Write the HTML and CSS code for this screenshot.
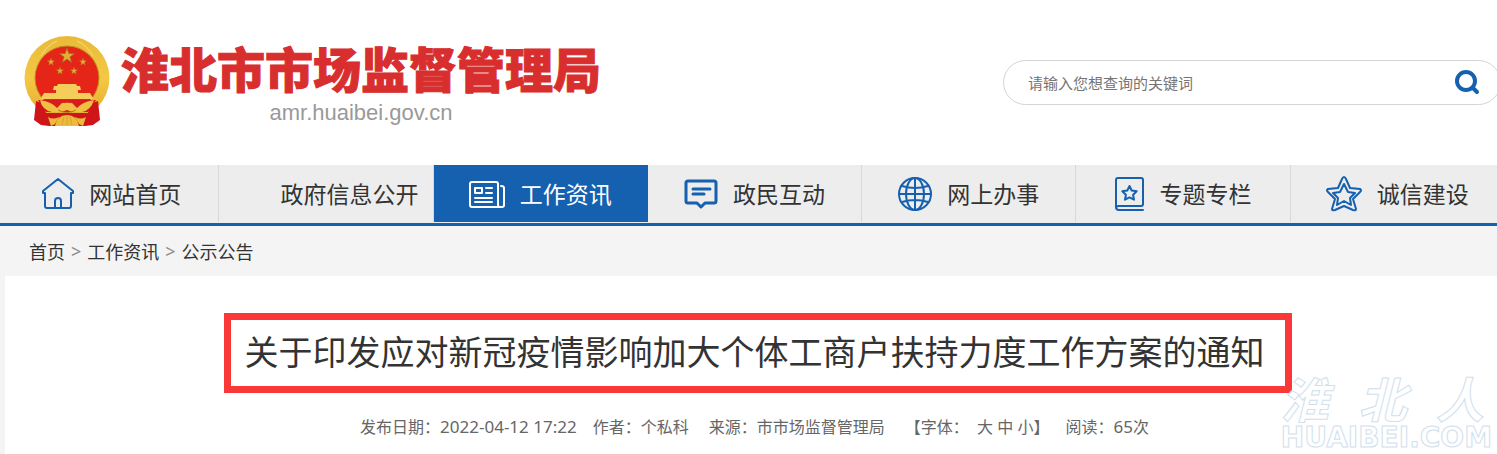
FILE: index.html
```
<!DOCTYPE html>
<html lang="zh-CN">
<head>
    <meta charset="UTF-8">
    <meta name="viewport" content="width=device-width, initial-scale=1.0">
    <title>淮北市市场监督管理局</title>
    <link rel="stylesheet" href="styles.css">
</head>
<body>
    <header class="header">
        <a class="logo" href="#">
            <svg class="emblem" viewBox="0 0 86 91" aria-hidden="true">
                <defs>
                    <linearGradient id="gold" x1="0" y1="0" x2="0" y2="1">
                        <stop offset="0" stop-color="#e9b93a"/>
                        <stop offset="0.5" stop-color="#f3c944"/>
                        <stop offset="1" stop-color="#e2a92c"/>
                    </linearGradient>
                    <path id="star" d="M0-10 2.3-3.1 9.5-3.1 3.7 1.2 5.9 8.1 0 3.9-5.9 8.1-3.7 1.2-9.5-3.1-2.3-3.1z"/>
                </defs>
                <ellipse cx="43" cy="42" rx="42.500" ry="42" fill="url(#gold)"/>
                <circle cx="43" cy="42" r="32" fill="#e62519" stroke="#c68a20" stroke-width="1"/>
                <g fill="#e2ae35" stroke="#a8691b" stroke-width="1">
                    <use href="#star" transform="translate(43 20) scale(.8)"/>
                    <use href="#star" transform="translate(27 26) scale(.4)"/>
                    <use href="#star" transform="translate(59 26) scale(.4)"/>
                    <use href="#star" transform="translate(36 35) scale(.4)"/>
                    <use href="#star" transform="translate(50 35) scale(.4)"/>
                </g>
                <path d="M34 48h18l1 2h3l1 4h-3v3H32v-3h-3l1-4h3zM20 57h46l3 5v1H17v-1z" fill="#f5cd5b"/>
                <path d="M14 64h58L64 76H22z" fill="#d91b1c"/>
                <path d="M12 65 10 84l7 5 8 1h36l8-1 7-5-2-19q-8 1-10 12H22q-2-11-10-12z" fill="#cf1519"/>
                <path d="M16 64q12 2 17 8l3-3q2-3 5-2 2-1 4 0 3-1 5 2l3 3q5-6 17-8-3 10-12 12-9 1-15-2-7 3-15 2-10-2-12-12z" fill="#f0c045"/>
                <path d="M34 74q9 5 18 0" fill="none" stroke="#b97a1c"/>
                <path d="M24 81q5 3 11 0l-4 7-4 2zM62 81q-5 3-11 0l4 7 4 2z" fill="#edbb3c"/>
                <path d="M31 90q2-11 12-11t12 11z" fill="#edbb3c"/>
                <path d="M38 89l2-8M48 89l-2-8M43 89v-9" fill="none" stroke="#d9a232"/>
                <path d="M17 20q6-11 16-15M69 20q-6-11-16-15" fill="none" stroke="#f8dc7a" stroke-width="1"/>
            </svg>
            <span class="logo-text">
                <span class="logo-name">淮北市市场监督管理局</span>
                <span class="logo-url">amr.huaibei.gov.cn</span>
            </span>
        </a>
        <form class="search">
            <input class="search-input" type="text" aria-label="搜索" placeholder="请输入您想查询的关键词">
            <button class="search-button" type="button" aria-label="搜索">
                <svg width="26" height="26" viewBox="0 0 26 26">
                    <circle cx="12" cy="11" r="9" fill="none" stroke="#1660b0" stroke-width="4"/>
                    <path d="M19 18l4 4" stroke="#1660b0" stroke-width="4" stroke-linecap="round"/>
                </svg>
            </button>
        </form>
    </header>

    <nav class="nav">
        <div class="nav-list">
            <a class="nav-item" href="#">
                <svg class="nav-icon" width="32" height="34" viewBox="0 0 32 34">
                    <path d="M1 16v-2L16 2l15 12v2h-2v13q0 2-2 2H5q-2 0-2-2V16zM13 31v-7q0-3 3-3t3 3v7"/>
                </svg>
                网站首页
            </a>
            <a class="nav-item" href="#">
                <span class="nav-blank"></span>
                政府信息公开
            </a>
            <a class="nav-item active" href="#">
                <svg class="nav-icon" width="36" height="34" viewBox="0 0 36 34">
                    <path d="M29 30H3q-2 0-2-2V7q0-2 2-2h24q2 0 2 2v21q0 2 2 2h2q2 0 2-2V11q0-2-3-2M6 11h7v5H6zM17 11h6M17 16h6M6 21h17M6 25h17"/>
                </svg>
                工作资讯
            </a>
            <a class="nav-item" href="#">
                <svg class="nav-icon bold" width="34" height="34" viewBox="0 0 34 34">
                    <path d="M4 4h26q2 0 2 2v18q0 2-2 2h-9l-4 4-4-4H4q-2 0-2-2V6q0-2 2-2zM9 12h17M9 17h11"/>
                </svg>
                政民互动
            </a>
            <a class="nav-item" href="#">
                <svg class="nav-icon" width="34" height="34" viewBox="0 0 34 34">
                    <circle cx="17" cy="17" r="16"/>
                    <ellipse cx="17" cy="17" rx="9" ry="16"/>
                    <path d="M17 1v32M1 17h32M4 9q13 4 26 0M4 25q13-4 26 0"/>
                </svg>
                网上办事
            </a>
            <a class="nav-item" href="#">
                <svg class="nav-icon" width="30" height="34" viewBox="0 0 30 34">
                    <path d="M28 33H4q-3 0-3-3V3q0-2 2-2h23q2 0 2 2v24q0 2-2 2H4q-3 0-3 2"/>
                    <path d="M14.500 9l2.200 4.500 5 .7-3.600 3.500.9 5-4.500-2.300-4.500 2.300.9-5-3.600-3.500 5-.7z"/>
                </svg>
                专题专栏
            </a>
            <a class="nav-item" href="#">
                <svg class="nav-icon" width="36" height="36" viewBox="0 0 36 36">
                    <path d="M18 1q1 0 2 2l4 9 10 1q2 1 0 3l-7 7 3 10q0 2-3 1l-9-4-9 4q-3 1-3-1l3-10-7-7q-2-2 0-3l10-1 4-9q1-2 2-2z"/>
                    <path d="M18 8l4 8 7 1-5 5 1 7-7-4-7 4 1-7-5-5 7-1z"/>
                </svg>
                诚信建设
            </a>
        </div>
    </nav>

    <div class="breadcrumb">
        <a href="#">首页</a>
        <span class="arrow">&gt;</span>
        <a href="#">工作资讯</a>
        <span class="arrow">&gt;</span>
        <a href="#">公示公告</a>
    </div>

    <main class="article">
        <h1 class="title">关于印发应对新冠疫情影响加大个体工商户扶持力度工作方案的通知</h1>
        <div class="meta">
            <span>发布日期：<span class="number">2022-04-12 17:22</span></span>
            <span>作者：个私科</span>
            <span class="source">来源：市市场监督管理局</span>
            <span>【字体：&nbsp; <a href="#">大</a> <a href="#">中</a> <a href="#">小</a>】</span>
            <span>阅读：<span class="number">65</span>次</span>
        </div>
        <div class="watermark">
            <span class="mark-name"><span>淮</span><span>北</span><span>人</span></span>
            <span class="mark-url">HUAIBEI.COM</span>
        </div>
    </main>
</body>
</html>
```
FILE: styles.css
```
body {
    margin: 0;
    font-family: "Noto Sans", "Noto Sans CJK SC", sans-serif;
    font-weight: 400;
    color: #333;
    background: #f4f4f4;
    min-height: 100vh;
    display: flex;
    flex-direction: column;
    overflow: hidden;
}
a {
    color: inherit;
    text-decoration: none;
}

/* Header */
.header {
    display: flex;
    justify-content: space-between;
    align-items: center;
    height: 165px;
    padding-left: 24px;
    background: white;
}
.logo {
    display: flex;
    gap: 11px;
    padding-bottom: 2px;
}
.emblem {
    width: 86px;
    height: 91px;
}
.logo-text {
    display: flex;
    flex-direction: column;
    align-items: center;
    padding-top: 8px;
}
.logo-name {
    font-family: "Noto Sans CJK SC", sans-serif;
    font-size: 48px;
    font-weight: 900;
    line-height: 46px;
    color: #d82e2e;
    -webkit-text-stroke: 1px #d82e2e;
}
.logo-url {
    padding-top: 10px;
    font-family: "Liberation Sans", Arial, sans-serif;
    font-size: 22px;
    line-height: 26px;
    color: #999;
}
.search {
    display: flex;
    align-items: center;
    box-sizing: border-box;
    width: 498px;
    height: 45px;
    margin-right: -4px;
    padding: 0 20px 0 24px;
    border: 1px solid #d4d4d4;
    border-radius: 23px;
}
.search-input {
    flex: 1;
    border: none;
    outline: none;
    padding: 0;
    background: none;
    font-family: inherit;
    font-size: 15px;
}
.search-input::placeholder {
    color: #757575;
}
.search-button {
    display: flex;
    padding: 0;
    border: none;
    background: none;
    cursor: pointer;
}

/* Navigation */
.nav {
    background: #ededed;
    border-bottom: 3px solid #1660b0;
}
.nav-list {
    display: grid;
    grid-template-columns: repeat(7, 1fr);
    margin: 0 -8px 0 5px;
    padding-bottom: 1px;
}
.nav-item {
    display: flex;
    justify-content: center;
    align-items: center;
    gap: 15px;
    box-sizing: border-box;
    height: 57px;
    border-right: 1px solid #d8d8d8;
    font-size: 23px;
    line-height: 32px;
    white-space: nowrap;
}
.nav-item.active {
    background: #1660b0;
    border-color: #1660b0;
    color: white;
}
.nav-icon {
    fill: none;
    stroke: #1660b0;
    stroke-width: 2;
    stroke-linejoin: round;
    stroke-linecap: round;
}
.nav-icon.bold {
    stroke-width: 3;
}
.active .nav-icon {
    stroke: white;
}
.nav-blank {
    width: 32px;
}

/* Breadcrumb */
.breadcrumb {
    display: flex;
    align-items: center;
    gap: 6px;
    height: 50px;
    padding-left: 29px;
    font-size: 18px;
}
.arrow {
    color: #888;
}

/* Article */
.article {
    position: relative;
    flex: 1;
    display: flex;
    flex-direction: column;
    align-items: center;
    margin: 0 -13px 0 5px;
    padding-top: 37px;
    background: white;
}
.title {
    margin: 0;
    padding: 7px 20px 9px 14px;
    border: 7px solid #fb3838;
    font-size: 34px;
    font-weight: inherit;
    line-height: 50px;
}
.meta {
    display: flex;
    gap: 16px;
    padding-top: 22px;
    padding-right: 6px;
    font-size: 16px;
    line-height: 24px;
    color: #666;
}
.number {
    font-size: 17px;
}
.source {
    padding: 0 4px;
}

/* Watermark over the bottom corner */
.watermark {
    position: absolute;
    right: 18px;
    bottom: 4px;
    color: white;
    -webkit-text-stroke: 1px #d0e0ec;
}
.mark-name {
    display: flex;
    justify-content: space-between;
    padding: 0 8px 5px 0;
    font-family: "Noto Sans CJK SC", sans-serif;
    font-size: 48px;
    font-style: italic;
    font-weight: 700;
    line-height: 48px;
}
.mark-url {
    display: block;
    font-family: "DejaVu Sans", sans-serif;
    font-size: 28px;
    font-weight: 700;
    line-height: 24px;
}
```
